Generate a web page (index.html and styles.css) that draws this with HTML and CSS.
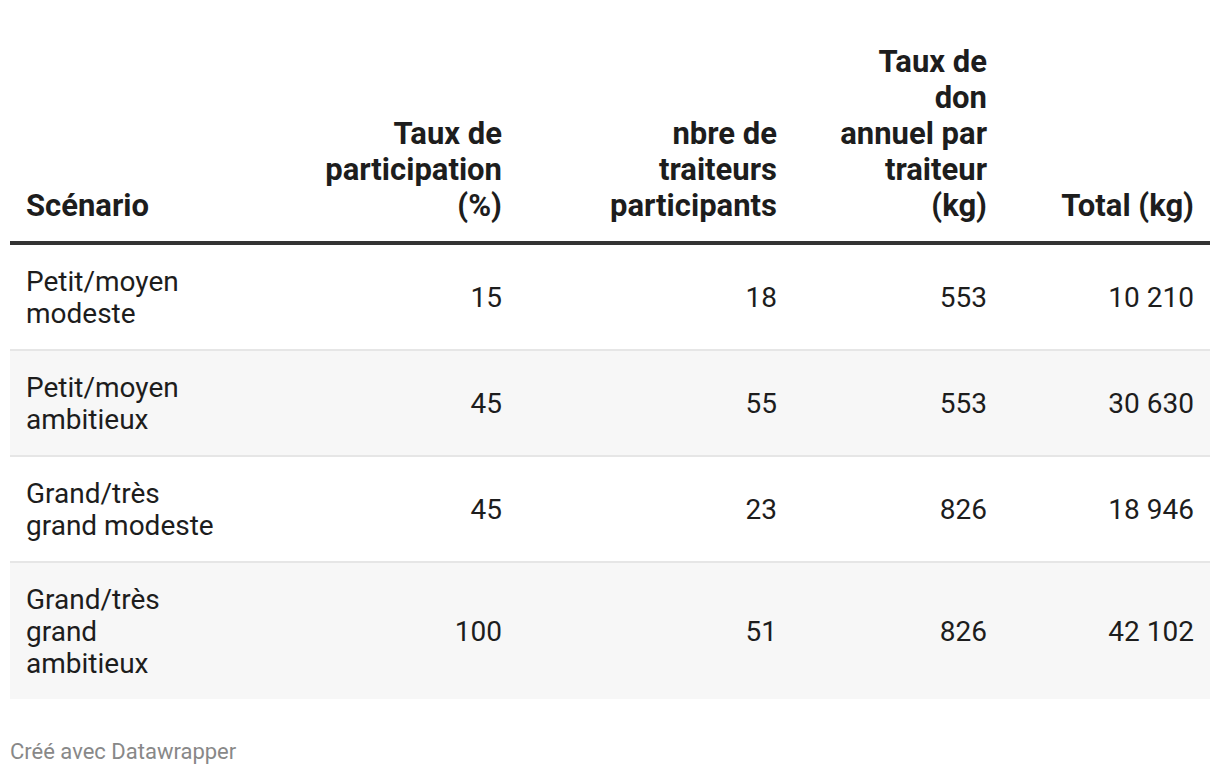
FILE: index.html
```html
<!DOCTYPE html>
<html lang="fr">
<head>
<meta charset="utf-8">
<title>Scénarios</title>
<link rel="stylesheet" href="styles.css">
</head>
<body>
<div class="chart">
  <table class="dw-table">
    <colgroup>
      <col class="c1"><col class="c2"><col class="c3"><col class="c4"><col class="c5">
    </colgroup>
    <thead>
      <tr>
        <th class="left">Scénario</th>
        <th class="num p2">Taux de participation (%)</th>
        <th class="num p3">nbre de traiteurs participants</th>
        <th class="num p4">Taux de don annuel par traiteur (kg)</th>
        <th class="num">Total (kg)</th>
      </tr>
    </thead>
    <tbody>
      <tr>
        <td class="left">Petit/moyen modeste</td>
        <td class="num">15</td>
        <td class="num">18</td>
        <td class="num">553</td>
        <td class="num">10 210</td>
      </tr>
      <tr class="alt">
        <td class="left">Petit/moyen ambitieux</td>
        <td class="num">45</td>
        <td class="num">55</td>
        <td class="num">553</td>
        <td class="num">30 630</td>
      </tr>
      <tr>
        <td class="left">Grand/très grand modeste</td>
        <td class="num">45</td>
        <td class="num">23</td>
        <td class="num">826</td>
        <td class="num">18 946</td>
      </tr>
      <tr class="alt last">
        <td class="left">Grand/très grand ambitieux</td>
        <td class="num">100</td>
        <td class="num">51</td>
        <td class="num">826</td>
        <td class="num">42 102</td>
      </tr>
    </tbody>
  </table>
  <div class="footer">Créé avec Datawrapper</div>
</div>
</body>
</html>
```

FILE: styles.css
```css
html, body {
  margin: 0;
  padding: 0;
  background: #ffffff;
}

body {
  font-family: Roboto, "Liberation Sans", Arial, sans-serif;
  color: #1d1d1d;
}

.chart {
  padding: 44px 10px 0 10px;
}

.dw-table {
  width: 1200px;
  border-collapse: collapse;
  table-layout: fixed;
  font-size: 28px;
}

.c1 { width: 230px; }
.c2 { width: 278px; }
.c3 { width: 275px; }
.c4 { width: 210px; }
.c5 { width: 207px; }

.dw-table th {
  font-size: 31px;
  font-weight: 700;
  line-height: 36px;
  vertical-align: bottom;
  padding: 0 16px 17px 16px;
  border-bottom: 4px solid #333333;
}

.dw-table td {
  font-weight: 400;
  line-height: 32px;
  vertical-align: middle;
  padding: 21px 16px 19px 16px;
  border-bottom: 2px solid #e6e6e6;
}

.dw-table tr.last td {
  border-bottom: none;
}

.dw-table tr.alt td {
  background: #f7f7f7;
}

.left { text-align: left; }
.num { text-align: right; }

.dw-table th.p2 { padding-left: 62px; }
.dw-table th.p3 { padding-left: 60px; }
.dw-table th.p4 { padding-left: 42px; }

.footer {
  margin-top: 41px;
  font-size: 22px;
  line-height: 24px;
  color: #888888;
}
```
